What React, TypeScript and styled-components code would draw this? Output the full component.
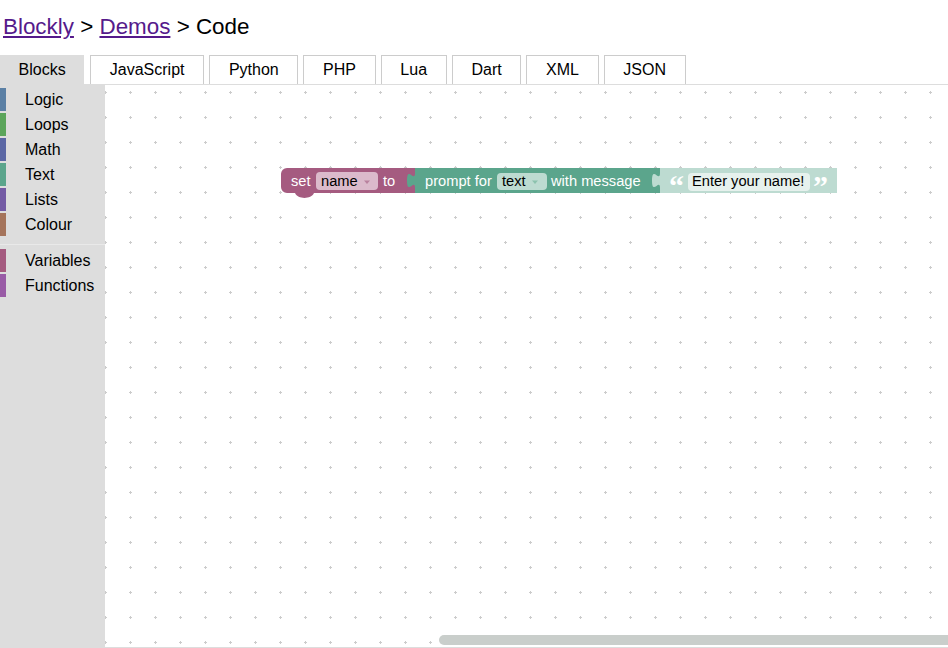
import React from 'react';
import styled, { createGlobalStyle, css } from 'styled-components';

const GlobalStyle = createGlobalStyle`
  html, body {
    margin: 0;
    padding: 0;
    overflow: hidden;
    background: #fff;
  }
  body {
    font-family: 'Liberation Sans', Arial, sans-serif;
  }
`;

const Page = styled.div`
  width: 948px;
  height: 648px;
  display: flex;
  flex-direction: column;
`;

const Title = styled.h1`
  margin: 0;
  padding: 14px 0 0 3px;
  font-size: 22.4px;
  line-height: 26px;
  font-weight: normal;
  color: #000;
`;

const Crumb = styled.a`
  color: #551a8b;
  text-decoration: underline;
`;

const TabRow = styled.div`
  display: flex;
  gap: 5px;
  margin-top: 15px;
  height: 29px;
`;

const Tab = styled.div<{ $on?: boolean }>`
  box-sizing: border-box;
  height: 29px;
  padding: 5px 18.7px;
  line-height: 18px;
  font-size: 16px;
  color: #000;
  border: 1px solid #ccc;
  border-bottom: none;
  cursor: pointer;

  ${(p) =>
    p.$on &&
    css`
      background: #ddd;
      border: none;
      padding: 6px 18.5px 5px;
      margin-right: 1px;
      cursor: default;
    `}
`;

const Content = styled.div`
  flex: 1;
  min-height: 0;
  display: flex;
  box-sizing: border-box;
  border-top: 1px solid #ddd;
  border-bottom: 1px solid #ddd;
`;

const Toolbox = styled.div`
  width: 105px;
  flex-shrink: 0;
  background: #ddd;
  padding-top: 3px;
  display: flex;
  flex-direction: column;
  gap: 2px;
  position: relative;
  z-index: 1;
`;

const Category = styled.div<{ $color: string }>`
  height: 23px;
  display: flex;
  align-items: center;
  box-sizing: border-box;
  border-left: 6px solid ${(p) => p.$color};
  padding: 1px 0 0 19px;
  font-size: 16px;
  color: #000;
  cursor: pointer;
`;

const Separator = styled.div`
  height: 6px;
  border-bottom: 1px solid #e9e9e9;
  margin-bottom: 2px;
`;

const Canvas = styled.div`
  flex: 1;
  position: relative;
  overflow: hidden;
  background: #fff;
`;

const Workspace = styled.svg`
  position: absolute;
  left: 0;
  top: 0;
  width: 100%;
  height: 100%;
  display: block;
`;

const Label = styled.text`
  fill: #fff;
  font-family: 'Liberation Sans', Arial, sans-serif;
  font-size: 14.67px;
`;

const FieldText = styled.text`
  fill: #000;
  font-family: 'Liberation Sans', Arial, sans-serif;
  font-size: 14.67px;
`;

const Quote = styled.text`
  fill: #fff;
  font-family: 'Liberation Serif', 'Times New Roman', serif;
  font-weight: bold;
  font-size: 30px;
`;

const Scrollbar = styled.div`
  position: absolute;
  left: 334px;
  right: -8px;
  bottom: 2px;
  height: 10px;
  border-radius: 5px;
  background: #c9cecb;
`;

const tabs = ['Blocks', 'JavaScript', 'Python', 'PHP', 'Lua', 'Dart', 'XML', 'JSON'];

const categories = [
  { name: 'Logic', color: '#5b80a5' },
  { name: 'Loops', color: '#5ba55b' },
  { name: 'Math', color: '#5b67a5' },
  { name: 'Text', color: '#5ba58c' },
  { name: 'Lists', color: '#745ba5' },
  { name: 'Colour', color: '#a5745b' },
];

const extraCategories = [
  { name: 'Variables', color: '#a55b80' },
  { name: 'Functions', color: '#995ba6' },
];

// output tab drawn downwards on the left edge of a block
const tab = 'c0,10 -8,-8 -8,7.5 s8,-2.5 8,7.5';

function Blocks() {
  return (
    // page coordinates: canvas starts at (105, 85)
    <g transform="translate(-105,-85)">
      {/* set [name] to */}
      <path
        d="M287,168 H415 V193 H314 C311,199.5 298,199.5 295,193 H287 a6,6 0 0 1 -6,-6 V174 a6,6 0 0 1 6,-6 z"
        fill="#a55b80"
      />
      <rect x="316" y="172" width="62" height="18" rx="4" fill="#dbbacb" />
      <Label x="291" y="186">set</Label>
      <FieldText x="321" y="186">name</FieldText>
      <polygon points="364,180.5 370,180.5 367,184" fill="#b9829e" />
      <Label x="383" y="186">to</Label>

      {/* prompt for [text] with message */}
      <path d={`M660,168 H415 V173 ${tab} V193 H660 z`} fill="#5ba58c" />
      <rect x="497" y="173" width="50" height="17" rx="4" fill="#bddbd1" />
      <Label x="425" y="186">prompt for</Label>
      <FieldText x="502" y="186">text</FieldText>
      <polygon points="532,180.5 538,180.5 535,184" fill="#8cc2ae" />
      <Label x="551" y="186">with message</Label>

      {/* shadow text block */}
      <path d={`M837,168 H660 V173 ${tab} V193 H837 z`} fill="#bddbd1" />
      <Quote x="669" y="196">“</Quote>
      <rect x="688" y="173" width="122" height="18" rx="4" fill="#e6f1ed" />
      <FieldText x="692" y="186">Enter your name!</FieldText>
      <Quote x="813" y="196">”</Quote>
    </g>
  );
}

export default function App() {
  return (
    <Page>
      <GlobalStyle />
      <Title>
        <Crumb href="#">Blockly</Crumb> &gt; <Crumb href="#">Demos</Crumb> &gt; Code
      </Title>
      <TabRow>
        {tabs.map((t, i) => (
          <Tab key={t} $on={i === 0}>
            {t}
          </Tab>
        ))}
      </TabRow>
      <Content>
        <Toolbox>
          {categories.map((c) => (
            <Category key={c.name} $color={c.color}>
              {c.name}
            </Category>
          ))}
          <Separator />
          {extraCategories.map((c) => (
            <Category key={c.name} $color={c.color}>
              {c.name}
            </Category>
          ))}
        </Toolbox>
        <Canvas>
          <Workspace>
            <defs>
              <pattern id="grid" width="25" height="25" x="-1" y="6" patternUnits="userSpaceOnUse">
                <rect x="0" y="1" width="3" height="1" fill="#ccc" />
                <rect x="1" y="0" width="1" height="3" fill="#ccc" />
              </pattern>
            </defs>
            <rect width="100%" height="100%" fill="url(#grid)" />
            <Blocks />
          </Workspace>
          <Scrollbar />
        </Canvas>
      </Content>
    </Page>
  );
}
